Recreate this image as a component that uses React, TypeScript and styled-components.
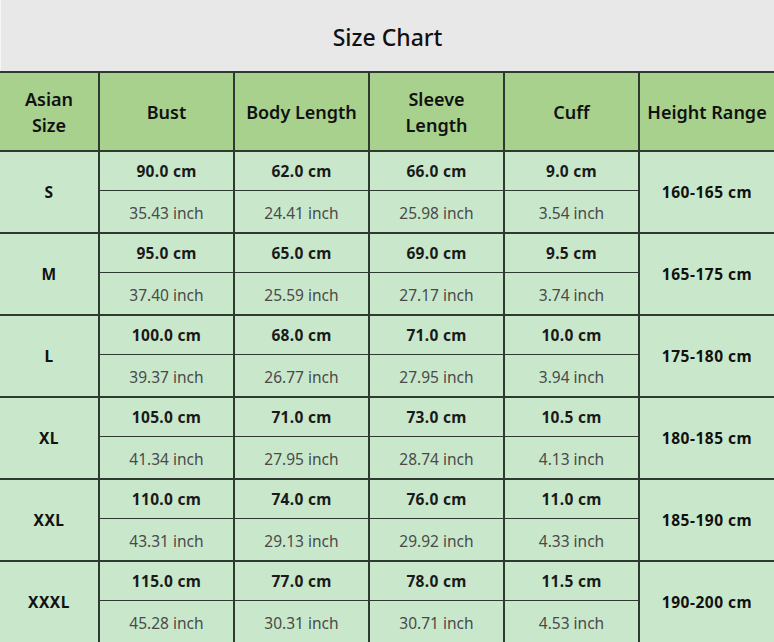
import styled, { createGlobalStyle } from "styled-components";

const GlobalStyle = createGlobalStyle`
  html, body {
    margin: 0;
    padding: 0;
    background: #ffffff;
    font-family: "Noto Sans", "Open Sans", sans-serif;
  }
`;

type SizeRow = {
  size: string;
  cm: string[];
  inch: string[];
  height: string;
};

const rows: SizeRow[] = [
  { size: "S", cm: ["90.0", "62.0", "66.0", "9.0"], inch: ["35.43", "24.41", "25.98", "3.54"], height: "160-165 cm" },
  { size: "M", cm: ["95.0", "65.0", "69.0", "9.5"], inch: ["37.40", "25.59", "27.17", "3.74"], height: "165-175 cm" },
  { size: "L", cm: ["100.0", "68.0", "71.0", "10.0"], inch: ["39.37", "26.77", "27.95", "3.94"], height: "175-180 cm" },
  { size: "XL", cm: ["105.0", "71.0", "73.0", "10.5"], inch: ["41.34", "27.95", "28.74", "4.13"], height: "180-185 cm" },
  { size: "XXL", cm: ["110.0", "74.0", "76.0", "11.0"], inch: ["43.31", "29.13", "29.92", "4.33"], height: "185-190 cm" },
  { size: "XXXL", cm: ["115.0", "77.0", "78.0", "11.5"], inch: ["45.28", "30.31", "30.71", "4.53"], height: "190-200 cm" },
];

const headers = ["Asian\nSize", "Bust", "Body Length", "Sleeve\nLength", "Cuff", "Height Range"];
const colWidths = [99, 135, 135, 135, 135, 135];

const App = () => {
  return (
    <Page>
      <GlobalStyle />
      <TitleBar>Size Chart</TitleBar>
      <Table>
        <colgroup>
          {colWidths.map((w, i) => (
            <Col key={i} $w={w} />
          ))}
        </colgroup>
        <thead>
          <tr>
            {headers.map((h) => (
              <HeadCell key={h}>{h}</HeadCell>
            ))}
          </tr>
        </thead>
        <tbody>
          {rows.map((r) => [
            <tr key={r.size + "-cm"}>
              <SpanCell rowSpan={2}>{r.size}</SpanCell>
              {r.cm.map((v, i) => (
                <ValueCell key={i} $bold>
                  {v} cm
                </ValueCell>
              ))}
              <SpanCell rowSpan={2}>{r.height}</SpanCell>
            </tr>,
            <tr key={r.size + "-inch"}>
              {r.inch.map((v, i) => (
                <ValueCell key={i}>{v} inch</ValueCell>
              ))}
            </tr>,
          ])}
        </tbody>
      </Table>
    </Page>
  );
};

export default App;

const Page = styled.div`
  width: 774px;
  height: 642px;
  overflow: hidden;
  background: #c9e8cb;
`;

const TitleBar = styled.div`
  height: 71px;
  display: flex;
  align-items: center;
  justify-content: center;
  background: #e8e8e8;
  border-left: 1px solid #f6f6f6;
  color: #111;
  font-size: 23px;
  font-weight: 500;
  padding-top: 3px;
  box-sizing: border-box;
`;

const Table = styled.table`
  width: 774px;
  border-collapse: collapse;
  table-layout: fixed;
  border-top: 2px solid #2e3a30;

  tr > *:first-child {
    border-left: none;
  }
  tr > *:last-child {
    border-right: none;
  }
`;

const Col = styled.col<{ $w: number }>`
  width: ${(p) => p.$w}px;
`;

const HeadCell = styled.th`
  height: 77px;
  padding: 0 2px;
  background: #a8d18e;
  color: #111;
  font-size: 18px;
  font-weight: 600;
  line-height: 26px;
  white-space: pre-line;
  text-align: center;
  border: 2px solid #2e3a30;
  border-top: none;
`;

const SpanCell = styled.td`
  background: #c9e8cb;
  color: #111;
  font-size: 15.5px;
  font-weight: 700;
  letter-spacing: 0.5px;
  text-align: center;
  border: 2px solid #2e3a30;
`;

const ValueCell = styled.td<{ $bold?: boolean }>`
  height: ${(p) => (p.$bold ? "38px" : "39px")};
  padding: 0;
  padding-top: ${(p) => (p.$bold ? "0" : "2px")};
  background: #c9e8cb;
  color: ${(p) => (p.$bold ? "#1a1a1a" : "#4a4a4a")};
  font-size: 15.5px;
  font-weight: ${(p) => (p.$bold ? 700 : 400)};
  letter-spacing: ${(p) => (p.$bold ? "0.3px" : "0")};
  text-align: center;
  border: 2px solid #2e3a30;
  border-width: ${(p) => (p.$bold ? "2px 2px 1.5px 2px" : "1.5px 2px 2px 2px")};
`;
